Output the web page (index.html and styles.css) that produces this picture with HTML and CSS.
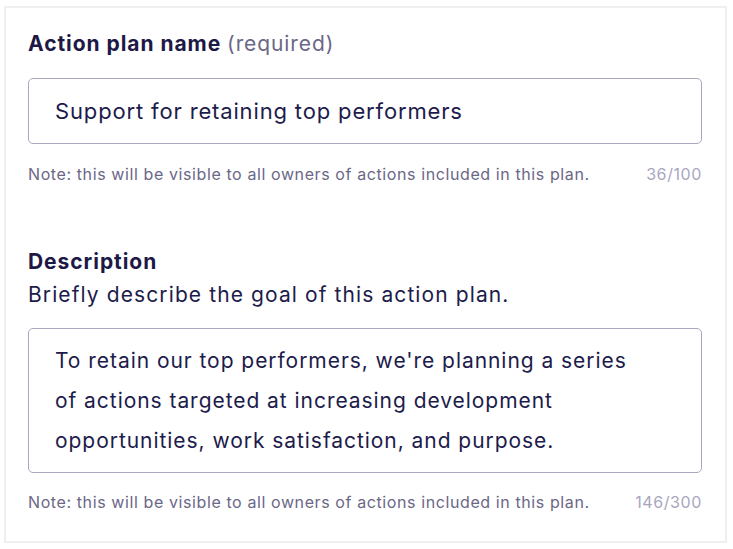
FILE: index.html
```html
<!DOCTYPE html>
<html lang="en">
<head>
<meta charset="utf-8">
<title>Action plan</title>
<link rel="stylesheet" href="styles.css">
</head>
<body>
<div class="card">
  <div class="field">
    <label class="label" for="plan-name">Action plan name <span class="muted">(required)</span></label>
    <div class="input" id="plan-name">Support for retaining top performers</div>
    <div class="help">
      <span>Note: this will be visible to all owners of actions included in this plan.</span>
      <span class="count">36/100</span>
    </div>
  </div>
  <div class="field field-desc">
    <div class="label">Description</div>
    <div class="sub">Briefly describe the goal of this action plan.</div>
    <div class="textarea">
      <span class="line">To retain our top performers, we're planning a series</span>
      <span class="line">of actions targeted at increasing development</span>
      <span class="line">opportunities, work satisfaction, and purpose.</span>
    </div>
    <div class="help help-last">
      <span>Note: this will be visible to all owners of actions included in this plan.</span>
      <span class="count">146/300</span>
    </div>
  </div>
</div>
</body>
</html>
```

FILE: styles.css
```css
* { box-sizing: border-box; }
body {
  margin: 0;
  background: #ffffff;
  font-family: Inter, "Noto Sans", sans-serif;
  color: #201b4b;
}
.card {
  margin: 6px 0 0 4px;
  width: 723px;
  height: 537px;
  border: 2px solid #efeff1;
  padding: 22px 23px 0 22px;
}
.label {
  display: block;
  font-size: 21px;
  line-height: 28px;
  font-weight: 700;
  letter-spacing: 0.95px;
  color: #1d1845;
}
.muted {
  font-weight: 400;
  letter-spacing: 0.9px;
  color: #6b6787;
}
.input {
  margin-top: 20px;
  height: 66px;
  border: 1px solid #aaa7c0;
  border-radius: 5px;
  padding: 0 26px;
  display: flex;
  align-items: center;
  font-size: 22px;
  letter-spacing: 0.85px;
  color: #201b4b;
}
.help {
  margin-top: 20px;
  display: flex;
  justify-content: space-between;
  font-size: 16px;
  line-height: 20px;
  letter-spacing: 0.6px;
  color: #6b6787;
}
.help-last { margin-top: 19px; }
.count { color: #a9a6bf; }
.field-desc { margin-top: 64px; }
.sub {
  margin-top: 5px;
  font-size: 21px;
  line-height: 28px;
  letter-spacing: 1.1px;
  color: #201b4b;
}
.textarea {
  margin-top: 19px;
  border: 1px solid #aaa7c0;
  border-radius: 5px;
  padding: 12px 26px 11px;
  font-size: 21px;
  line-height: 40px;
  letter-spacing: 0.95px;
}
.line { display: block; white-space: nowrap; }
```
